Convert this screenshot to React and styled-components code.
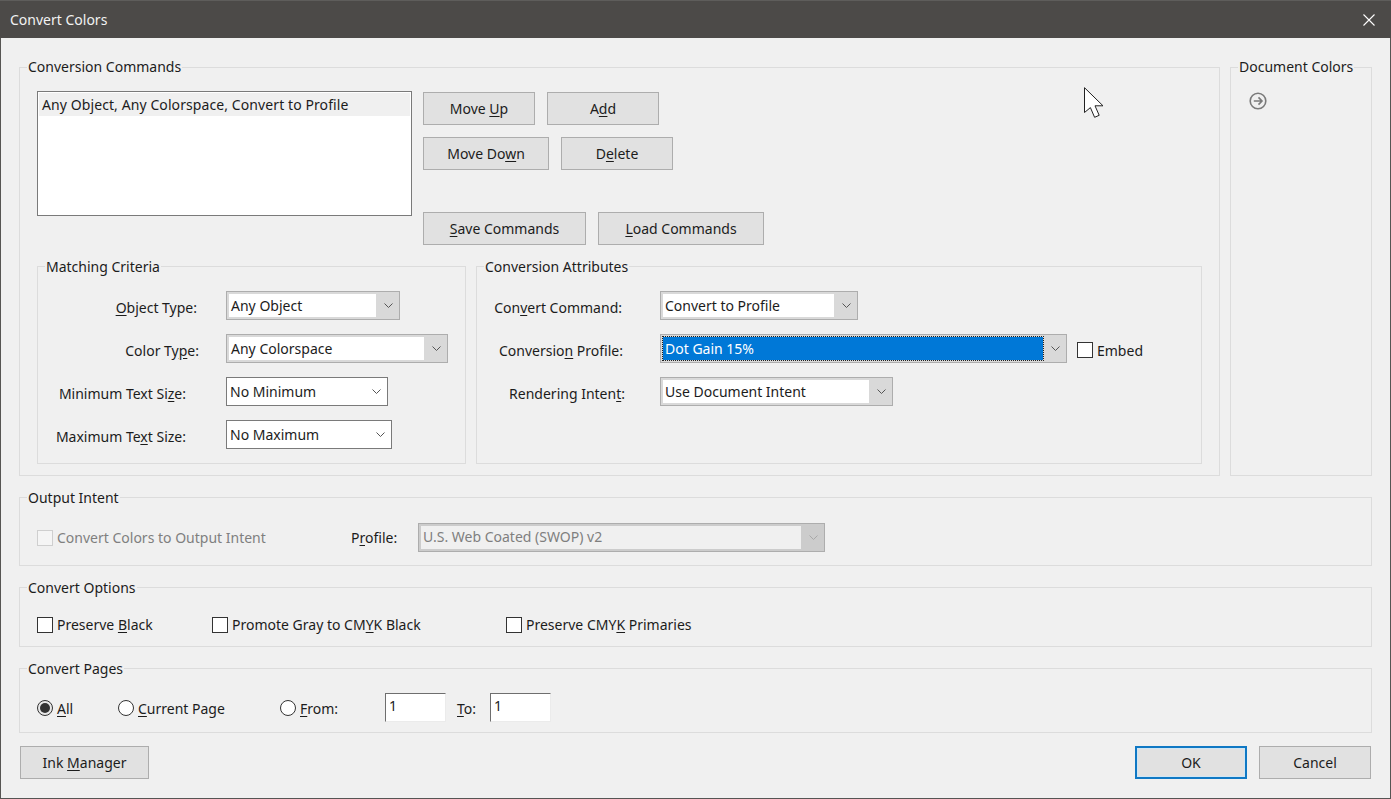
import styled, { createGlobalStyle } from 'styled-components';

const GlobalStyle = createGlobalStyle`
  html, body {
    margin: 0;
    padding: 0;
    background: #f0f0f0;
    overflow: hidden;
  }
  * {
    box-sizing: border-box;
  }
`;

function ChevronIcon({ color = '#555555' }) {
  return (
    <svg width="9" height="5" viewBox="0 0 9 5" fill="none">
      <path d="M0.5 0.5L4.5 4.5L8.5 0.5" stroke={color} strokeWidth="1" />
    </svg>
  );
}

function Select({ width, value, variant, selected }) {
  return (
    <SelectBox $width={width} $variant={variant}>
      <SelectValue $variant={variant} $selected={selected}>
        <span>{value}</span>
      </SelectValue>
      <SelectArrow $variant={variant}>
        <ChevronIcon color={variant === 'disabled' ? '#a8a8a8' : '#555555'} />
      </SelectArrow>
    </SelectBox>
  );
}

function FormRow({ labelWidth, end, children, select }) {
  return (
    <Row>
      <FieldLabel $width={labelWidth} $end={end}>{children}</FieldLabel>
      {select}
    </Row>
  );
}

export default function App() {
  return (
    <Window>
      <GlobalStyle />
      <TitleBar>
        <Title>Convert Colors</Title>
        <CloseButton>
          <svg width="12" height="12" viewBox="0 0 12 12" fill="none">
            <path d="M0.5 0.5L11.5 11.5M11.5 0.5L0.5 11.5" stroke="#ffffff" strokeWidth="1.1" />
          </svg>
        </CloseButton>
      </TitleBar>

      <Content>
        <TopSection>
          <MainGroup>
            <Legend $top>Conversion Commands</Legend>
            <CommandsBody>
              <CommandsTop>
                <ListBox>
                  <ListRow>Any Object, Any Colorspace, Convert to Profile</ListRow>
                </ListBox>
                <CommandButtons>
                  <ButtonRow>
                    <Button $width={112}>Move <Key>U</Key>p</Button>
                    <Button $width={112}>A<Key>d</Key>d</Button>
                  </ButtonRow>
                  <ButtonRow>
                    <Button $width={126}>Move Do<Key>w</Key>n</Button>
                    <Button $width={112}>D<Key>e</Key>lete</Button>
                  </ButtonRow>
                  <ButtonRow $push={30}>
                    <Button $width={163}><Key>S</Key>ave Commands</Button>
                    <Button $width={166}><Key>L</Key>oad Commands</Button>
                  </ButtonRow>
                </CommandButtons>
              </CommandsTop>

              <SubGroups>
                <MatchingGroup>
                  <Legend>Matching Criteria</Legend>
                  <FormBody>
                    <FormRow labelWidth={188} end={29} select={<Select width={174} value="Any Object" />}>
                      <Key>O</Key>bject Type:
                    </FormRow>
                    <FormRow labelWidth={188} end={27} select={<Select width={222} value="Any Colorspace" />}>
                      Color Ty<Key>p</Key>e:
                    </FormRow>
                    <FormRow labelWidth={188} end={40} select={<Select width={162} value="No Minimum" variant="plain" />}>
                      Minimum Text Si<Key>z</Key>e:
                    </FormRow>
                    <FormRow labelWidth={188} end={40} select={<Select width={166} value="No Maximum" variant="plain" />}>
                      Maximum Te<Key>x</Key>t Size:
                    </FormRow>
                  </FormBody>
                </MatchingGroup>

                <AttributesGroup>
                  <Legend>Conversion Attributes</Legend>
                  <FormBody>
                    <FormRow labelWidth={183} end={38} select={<Select width={198} value="Convert to Profile" />}>
                      Con<Key>v</Key>ert Command:
                    </FormRow>
                    <Row>
                      <FieldLabel $width={183} $end={37}>Conversio<Key>n</Key> Profile:</FieldLabel>
                      <Select width={407} value="Dot Gain 15%" selected />
                      <EmbedOption>
                        <CheckBox />
                        <OptionText>Embed</OptionText>
                      </EmbedOption>
                    </Row>
                    <FormRow labelWidth={183} end={35} select={<Select width={233} value="Use Document Intent" />}>
                      Rendering Inten<Key>t</Key>:
                    </FormRow>
                  </FormBody>
                </AttributesGroup>
              </SubGroups>
            </CommandsBody>
          </MainGroup>

          <SideGroup>
            <Legend $top>Document Colors</Legend>
            <SideBody>
              <svg width="18" height="18" viewBox="0 0 18 18" fill="none">
                <circle cx="9" cy="9" r="7.8" stroke="#7a7a7a" strokeWidth="1.6" />
                <path d="M4.8 9H12.8M9.5 5.4L13 9L9.5 12.6" stroke="#7a7a7a" strokeWidth="1.6" />
              </svg>
            </SideBody>
          </SideGroup>
        </TopSection>

        <OutputGroup>
          <Legend>Output Intent</Legend>
          <OptionsRow>
            <Option $width={314}>
              <CheckBox $disabled />
              <OptionText $disabled>Convert Colors to Output Intent</OptionText>
            </Option>
            <ProfileLabel>P<Key>r</Key>ofile:</ProfileLabel>
            <Select width={407} value="U.S. Web Coated (SWOP) v2" variant="disabled" />
          </OptionsRow>
        </OutputGroup>

        <OptionsGroup>
          <Legend>Convert Options</Legend>
          <OptionsRow>
            <Option $width={175}>
              <CheckBox />
              <OptionText>Preserve <Key>B</Key>lack</OptionText>
            </Option>
            <Option $width={294}>
              <CheckBox />
              <OptionText>Promote Gray to CM<Key>Y</Key>K Black</OptionText>
            </Option>
            <Option>
              <CheckBox />
              <OptionText>Preserve CMY<Key>K</Key> Primaries</OptionText>
            </Option>
          </OptionsRow>
        </OptionsGroup>

        <PagesGroup>
          <Legend>Convert Pages</Legend>
          <PagesRow>
            <Option $width={81}>
              <Radio $checked />
              <OptionText><Key>A</Key>ll</OptionText>
            </Option>
            <Option $width={162}>
              <Radio />
              <OptionText><Key>C</Key>urrent Page</OptionText>
            </Option>
            <Option $width={105}>
              <Radio />
              <OptionText><Key>F</Key>rom:</OptionText>
            </Option>
            <PageInput defaultValue="1" />
            <ToLabel><Key>T</Key>o:</ToLabel>
            <PageInput defaultValue="1" />
          </PagesRow>
        </PagesGroup>

        <Footer>
          <Button $width={129}>Ink <Key>M</Key>anager</Button>
          <FooterRight>
            <Button $width={112} $primary>OK</Button>
            <Button $width={112}>Cancel</Button>
          </FooterRight>
        </Footer>
      </Content>

      <Cursor width="21" height="32" viewBox="0 0 21 32" fill="none">
        <path
          d="M0.5 0.7V25.5L6.4 20.6L10.6 30.3L15.2 28.3L11 18.8H19L0.5 0.7Z"
          fill="#ffffff"
          stroke="#222222"
          strokeWidth="1"
        />
      </Cursor>
    </Window>
  );
}

const Window = styled.div`
  position: relative;
  width: 1391px;
  height: 799px;
  display: flex;
  flex-direction: column;
  background: #f0f0f0;
  border: 1px solid #565553;
  border-top: none;
  font-family: 'Noto Sans', 'Open Sans', sans-serif;
  font-size: 14px;
  color: #1c1c1c;
`;

const TitleBar = styled.div`
  height: 38px;
  flex-shrink: 0;
  margin: 0 -1px;
  padding: 0 16px 0 10px;
  display: flex;
  align-items: center;
  justify-content: space-between;
  background: #4c4a48;
  border-top: 1px solid #5e5d5b;
`;

const Title = styled.div`
  color: #f2f2f2;
  font-size: 14px;
`;

const CloseButton = styled.div`
  display: flex;
`;

const Content = styled.div`
  flex: 1;
  padding: 19px 18px 0;
  display: flex;
  flex-direction: column;
`;

const TopSection = styled.div`
  display: flex;
  gap: 10px;
`;

const Group = styled.fieldset`
  margin: 0;
  padding: 0;
  min-width: 0;
  border: 1px solid #dcdcdc;
`;

const Legend = styled.legend`
  margin-left: 7px;
  padding: 0 1px;
  height: 20px;
  line-height: ${(p) => (p.$top ? '20px' : '22px')};
  color: #1c1c1c;
`;

const MainGroup = styled(Group)`
  width: 1201px;
  height: 419px;
`;

const SideGroup = styled(Group)`
  width: 142px;
  height: 419px;
`;

const SideBody = styled.div`
  padding: 15px 0 0 18px;
`;

const CommandsBody = styled.div`
  padding: 14px 17px 0;
`;

const CommandsTop = styled.div`
  display: flex;
  gap: 11px;
`;

const ListBox = styled.div`
  width: 375px;
  height: 125px;
  padding: 1px;
  background: #ffffff;
  border: 1px solid #7a7a7a;
`;

const ListRow = styled.div`
  height: 23px;
  line-height: 23px;
  padding-left: 3px;
  letter-spacing: 0.09px;
  background: #f0f0f0;
`;

const CommandButtons = styled.div`
  padding-top: 1px;
  display: flex;
  flex-direction: column;
  gap: 12px;
`;

const ButtonRow = styled.div`
  display: flex;
  gap: 12px;
  margin-top: ${(p) => p.$push || 0}px;
`;

const Button = styled.button`
  width: ${(p) => p.$width}px;
  height: 33px;
  padding: 0;
  font: inherit;
  color: #1c1c1c;
  background: #e1e1e1;
  border: ${(p) => (p.$primary ? '2px solid #0f78c4' : '1px solid #adadad')};
  box-shadow: ${(p) => (p.$primary ? 'inset 0 0 0 1px #cfe6f5' : 'none')};
`;

const Key = styled.span`
  text-decoration: underline;
  text-underline-offset: 2px;
`;

const SubGroups = styled.div`
  margin-top: 11px;
  display: flex;
  gap: 10px;
`;

const MatchingGroup = styled(Group)`
  width: 429px;
  height: 208px;
`;

const AttributesGroup = styled(Group)`
  width: 726px;
  height: 208px;
`;

const FormBody = styled.div`
  padding-top: 15px;
  display: flex;
  flex-direction: column;
  gap: 14px;
`;

const Row = styled.div`
  height: 29px;
  display: flex;
  align-items: center;
`;

const FieldLabel = styled.div`
  width: ${(p) => p.$width}px;
  padding: 4px ${(p) => p.$end}px 0 0;
  text-align: right;
  white-space: nowrap;
`;

const SelectBox = styled.div`
  width: ${(p) => p.$width}px;
  height: 29px;
  display: flex;
  flex-shrink: 0;
  padding: ${(p) => (p.$variant === 'plain' ? '0' : '2px 0 2px 2px')};
  background: ${(p) => {
    if (p.$variant === 'plain') return '#ffffff';
    if (p.$variant === 'disabled') return '#cccccc';
    return '#d9d9d9';
  }};
  border: 1px solid ${(p) => {
    if (p.$variant === 'plain') return '#7a7a7a';
    return '#adadad';
  }};
`;

const SelectValue = styled.div`
  flex: 1;
  min-width: 0;
  display: flex;
  align-items: center;
  padding-left: ${(p) => (p.$variant === 'plain' ? '3px' : '2px')};
  padding-bottom: 1px;
  white-space: nowrap;
  background: ${(p) => {
    if (p.$selected) return '#0078d7';
    if (p.$variant === 'disabled') return '#f0f0f0';
    return '#ffffff';
  }};
  color: ${(p) => {
    if (p.$selected) return '#ffffff';
    if (p.$variant === 'disabled') return '#7f7f7f';
    return '#1c1c1c';
  }};
  outline: ${(p) => (p.$selected ? '1px dotted #1f1f1f' : 'none')};
`;

const SelectArrow = styled.div`
  width: 23px;
  flex-shrink: 0;
  padding-left: 2px;
  display: flex;
  align-items: center;
  justify-content: center;
`;

const EmbedOption = styled.div`
  margin-left: 10px;
  padding-top: 3px;
  display: flex;
  align-items: center;
  gap: 4px;
`;

const CheckBox = styled.span`
  width: 16px;
  height: 16px;
  flex-shrink: 0;
  background: ${(p) => (p.$disabled ? '#f5f5f5' : '#ffffff')};
  border: 1px solid ${(p) => (p.$disabled ? '#cfcfcf' : '#333333')};
`;

const Radio = styled.span`
  width: 16px;
  height: 16px;
  flex-shrink: 0;
  display: flex;
  align-items: center;
  justify-content: center;
  background: ${(p) => (p.$checked ? '#e8e8e8' : '#ffffff')};
  border: 1px solid #333333;
  border-radius: 50%;

  &::after {
    content: '';
    display: ${(p) => (p.$checked ? 'block' : 'none')};
    width: 10px;
    height: 10px;
    border-radius: 50%;
    background: #333333;
  }
`;

const OptionText = styled.span`
  white-space: nowrap;
  color: ${(p) => (p.$disabled ? '#7f7f7f' : '#1c1c1c')};
`;

const OptionsRow = styled.div`
  padding: 4px 0 0 17px;
  display: flex;
  align-items: center;
  height: 34px;
`;

const Option = styled.div`
  width: ${(p) => (p.$width ? `${p.$width}px` : 'auto')};
  flex-shrink: 0;
  padding-top: 1px;
  display: flex;
  align-items: center;
  gap: 4px;
`;

const ProfileLabel = styled.div`
  width: 67px;
`;

const OutputGroup = styled(Group)`
  margin-top: 11px;
  height: 79px;

  ${OptionsRow} {
    margin-top: 11px;
  }
`;

const OptionsGroup = styled(Group)`
  margin-top: 11px;
  height: 70px;

  ${OptionsRow} {
    margin-top: 8px;
  }
`;

const PagesGroup = styled(Group)`
  margin-top: 11px;
  height: 75px;
`;

const PagesRow = styled.div`
  margin-top: 15px;
  padding-left: 17px;
  display: flex;
  align-items: center;
`;

const PageInput = styled.input`
  width: 61px;
  height: 29px;
  padding: 0 0 5px 3px;
  font: inherit;
  color: #1c1c1c;
  background: #ffffff;
  border: 1px solid;
  border-color: #6e6e6e #ebebeb #ebebeb #6e6e6e;
  outline: none;
`;

const ToLabel = styled.div`
  width: 44px;
  padding: 1px 0 0 11px;
`;

const Footer = styled.div`
  margin-top: 13px;
  padding: 0 1px;
  display: flex;
  justify-content: space-between;
`;

const FooterRight = styled.div`
  display: flex;
  gap: 12px;
`;

const Cursor = styled.svg`
  position: absolute;
  left: 1083px;
  top: 87px;
`;
